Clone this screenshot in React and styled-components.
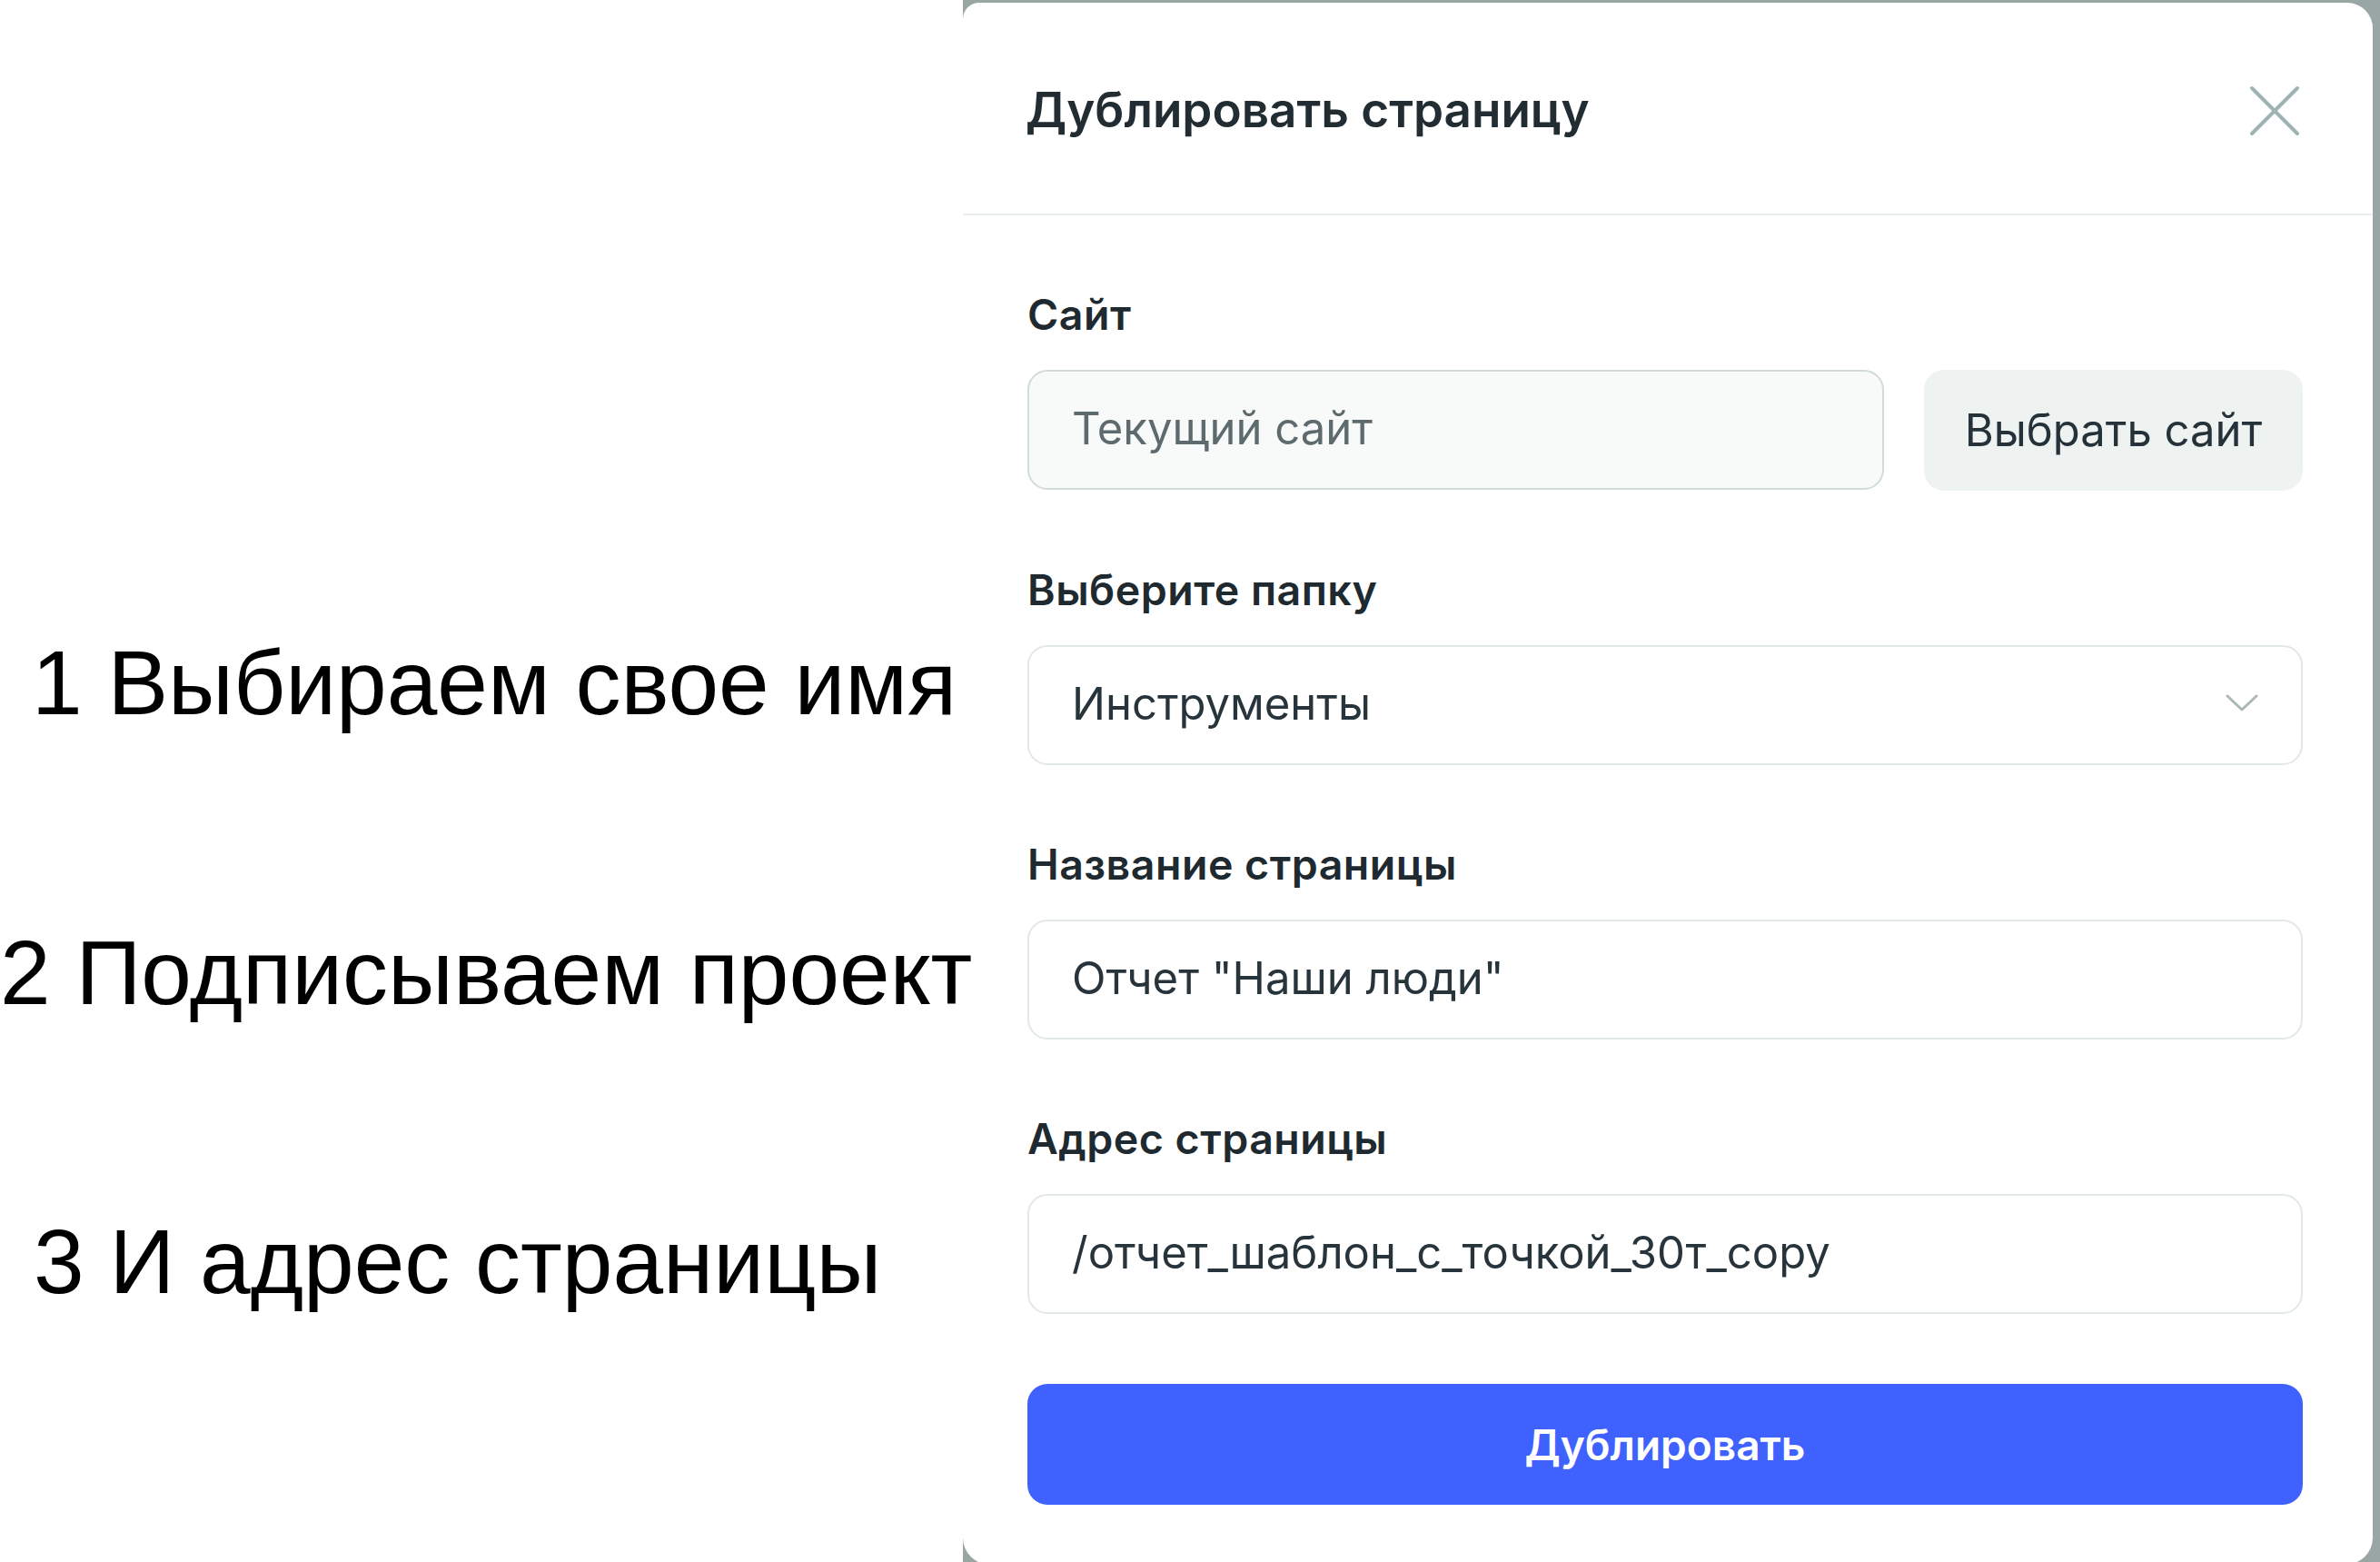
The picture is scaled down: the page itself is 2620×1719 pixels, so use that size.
import React from 'react';
import styled, { createGlobalStyle } from 'styled-components';

// === GLOBAL ===
const GlobalStyle = createGlobalStyle`
  html, body {
    margin: 0;
    padding: 0;
    background: #ffffff;
  }
  * {
    box-sizing: border-box;
  }
`;

// === LAYOUT ===
const Page = styled.div`
  display: flex;
  width: 2620px;
  height: 1719px;
  overflow: hidden;
  background: #ffffff;
`;

const Notes = styled.div`
  position: relative;
  z-index: 1;
  flex: 0 0 1060px;
  width: 1060px;
  min-width: 0;
  display: flex;
  flex-direction: column;
  padding-top: 701px;
`;

const Note = styled.div`
  margin-top: ${(p) => p.$gap || 0}px;
  padding-left: ${(p) => p.$indent || 0}px;
  font-family: 'Liberation Sans', Arial, sans-serif;
  font-size: 100px;
  line-height: 100px;
  color: #000000;
  white-space: nowrap;
`;

const Backdrop = styled.div`
  flex: 1;
  min-width: 0;
  display: flex;
  align-items: flex-start;
  padding: 3px 8px 0 0;
  background: #99a6a4;
`;

// === MODAL ===
const Modal = styled.div`
  flex: 1;
  min-width: 0;
  height: 1719px;
  display: flex;
  flex-direction: column;
  background: #ffffff;
  border-radius: 18px 28px 30px 30px;
  font-family: Inter, 'Noto Sans', sans-serif;
  color: #1e2a30;
`;

const Header = styled.div`
  display: flex;
  align-items: center;
  justify-content: space-between;
  height: 234px;
  padding: 6px 80px 0 69px;
  border-bottom: 2px solid #e7eeed;
`;

const Title = styled.h2`
  margin: 0;
  font-size: 53px;
  font-weight: 600;
  line-height: 1.2;
  color: #222d33;
`;

const CloseButton = styled.button`
  display: flex;
  padding: 0;
  border: none;
  background: none;
  cursor: pointer;
`;

const Body = styled.div`
  display: flex;
  flex-direction: column;
  padding: 83px 77px 0 71px;
`;

const Field = styled.div`
  display: flex;
  flex-direction: column;
  margin-bottom: 83px;
`;

const Label = styled.label`
  font-size: 46.5px;
  font-weight: 600;
  line-height: 52px;
  margin-bottom: 35px;
  letter-spacing: 0.5px;
`;

const Row = styled.div`
  display: flex;
  gap: 44px;
`;

const Box = styled.div`
  flex: 1 1 auto;
  min-width: 0;
  display: flex;
  align-items: center;
  justify-content: space-between;
  height: 132px;
  padding: 0 47px 4px 47px;
  border: 2px solid ${(p) => (p.$muted ? '#d0dbda' : '#e1e8e7')};
  border-radius: 22px;
  background: ${(p) => (p.$muted ? '#f8fafa' : '#ffffff')};
  font-size: 49px;
  color: ${(p) => (p.$muted ? '#5d6b6f' : '#28343b')};
  white-space: nowrap;
`;

const GhostButton = styled.button`
  flex: 0 0 417px;
  height: 133px;
  border: none;
  border-radius: 22px;
  background: #eef2f1;
  font-family: inherit;
  font-size: 49px;
  color: #25323a;
  cursor: pointer;
`;

const PrimaryButton = styled.button`
  height: 133px;
  margin-top: -6px;
  border: none;
  border-radius: 22px;
  background: #3f62ff;
  font-family: inherit;
  font-size: 46px;
  font-weight: 600;
  color: #ffffff;
  cursor: pointer;
`;

// === ICONS ===
const CloseIcon = () => (
  <svg width="56" height="56" viewBox="0 0 56 56" fill="none">
    <path d="M3 3 L53 53 M53 3 L3 53" stroke="#9fb3b4" strokeWidth="4" strokeLinecap="round" />
  </svg>
);

const ChevronIcon = () => (
  <svg width="36" height="20" viewBox="0 0 36 20" fill="none">
    <path d="M2 2 L18 17 L34 2" stroke="#a9b8b7" strokeWidth="3" strokeLinecap="round" strokeLinejoin="round" />
  </svg>
);

// === MAIN ===
export default function App() {
  return (
    <>
      <GlobalStyle />
      <Page>
        <Notes>
          <Note $indent={35}>1 Выбираем свое имя</Note>
          <Note $gap={219}>2 Подписываем проект</Note>
          <Note $gap={218} $indent={37}>3 И адрес страницы</Note>
        </Notes>

        <Backdrop>
          <Modal>
            <Header>
              <Title>Дублировать страницу</Title>
              <CloseButton aria-label="Закрыть">
                <CloseIcon />
              </CloseButton>
            </Header>

            <Body>
              <Field>
                <Label>Сайт</Label>
                <Row>
                  <Box $muted>Текущий сайт</Box>
                  <GhostButton>Выбрать сайт</GhostButton>
                </Row>
              </Field>

              <Field>
                <Label>Выберите папку</Label>
                <Box>
                  Инструменты
                  <ChevronIcon />
                </Box>
              </Field>

              <Field>
                <Label>Название страницы</Label>
                <Box>Отчет "Наши люди"</Box>
              </Field>

              <Field>
                <Label>Адрес страницы</Label>
                <Box>/отчет_шаблон_с_точкой_30т_copy</Box>
              </Field>

              <PrimaryButton>Дублировать</PrimaryButton>
            </Body>
          </Modal>
        </Backdrop>
      </Page>
    </>
  );
}
